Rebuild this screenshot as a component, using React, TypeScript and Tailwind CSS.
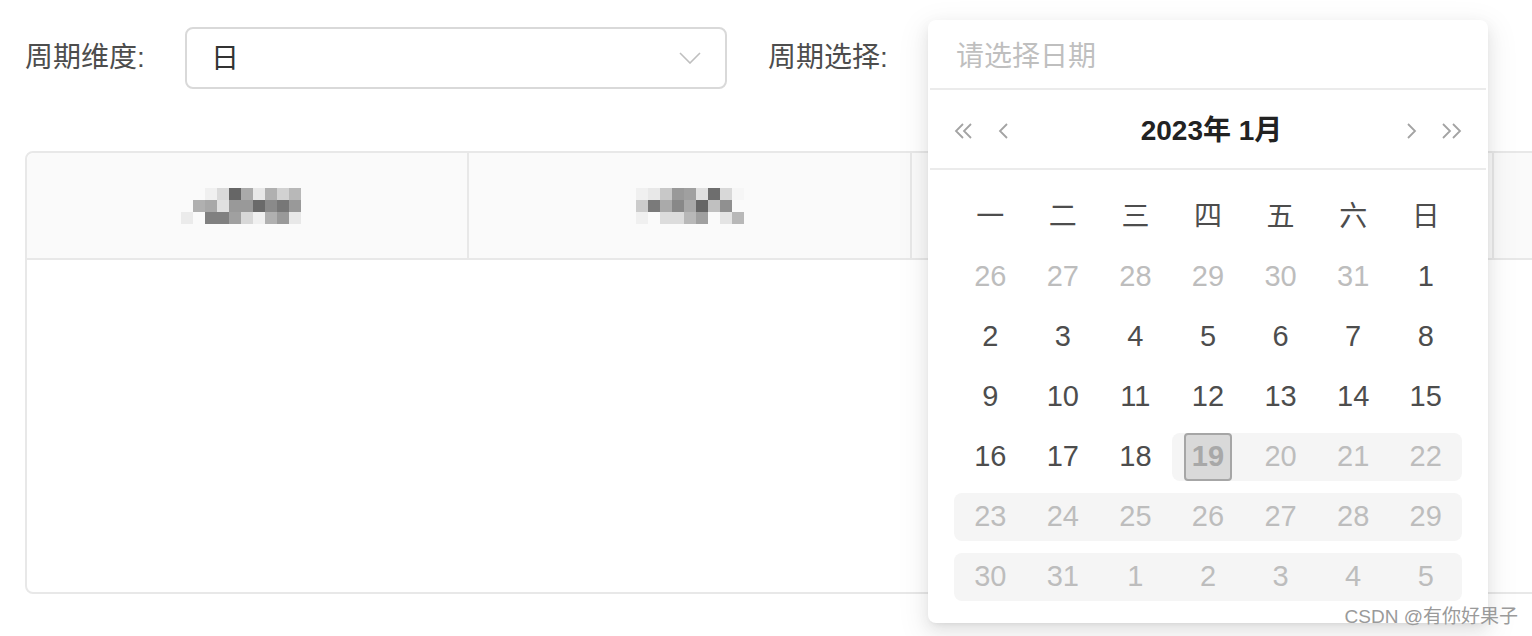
import React from "react";

const font = "font-['Liberation_Sans','Noto_Sans_CJK_SC',sans-serif]";

// pixelated (blurred) header labels, 12px blocks
const mosaicA: string[][] = [
  ["", "", "bg-[#f0f0f0]", "bg-[#dadada]", "bg-[#666666]", "bg-[#aaaaaa]", "bg-[#e8e8e8]", "bg-[#b0b0b0]", "bg-[#d2d2d2]", "bg-[#b8b8b8]"],
  ["", "bg-[#b0b0b0]", "bg-[#a8a8a8]", "bg-[#e0e0e0]", "bg-[#999999]", "bg-[#999999]", "bg-[#6a6a6a]", "bg-[#8a8a8a]", "bg-[#777777]", "bg-[#999999]"],
  ["bg-[#ebebeb]", "", "bg-[#808080]", "bg-[#808080]", "bg-[#a0a0a0]", "bg-[#d8d8d8]", "bg-[#f0f0f0]", "bg-[#b0b0b0]", "bg-[#999999]", "bg-[#e8e8e8]"],
];

const mosaicB: string[][] = [
  ["bg-[#f0f0f0]", "bg-[#e8e8e8]", "bg-[#c8c8c8]", "bg-[#999999]", "bg-[#a0a0a0]", "bg-[#e0e0e0]", "bg-[#6e6e6e]", "bg-[#d8d8d8]", "bg-[#f6f6f6]"],
  ["bg-[#cccccc]", "bg-[#7a7a7a]", "bg-[#aaaaaa]", "bg-[#888888]", "bg-[#a8a8a8]", "bg-[#666666]", "bg-[#c0c0c0]", "bg-[#909090]", ""],
  ["bg-[#f0f0f0]", "", "bg-[#dcdcdc]", "bg-[#dcdcdc]", "bg-[#b8b8b8]", "bg-[#a0a0a0]", "", "bg-[#e4e4e4]", "bg-[#b8b8b8]"],
];

function Mosaic({ rows }: { rows: string[][] }) {
  return (
    <div className="flex flex-col">
      {rows.map((row, i) => (
        <div key={i} className="flex">
          {row.map((c, j) => (
            <div key={j} className={`w-[12px] h-[12px] ${c}`} />
          ))}
        </div>
      ))}
    </div>
  );
}

type Cell = { d: number; kind: "out" | "in" | "off" | "today" };

const weeks: Cell[][] = [
  [26, 27, 28, 29, 30, 31].map((d) => ({ d, kind: "out" as const })).concat([{ d: 1, kind: "in" }]),
  [2, 3, 4, 5, 6, 7, 8].map((d) => ({ d, kind: "in" as const })),
  [9, 10, 11, 12, 13, 14, 15].map((d) => ({ d, kind: "in" as const })),
  [
    { d: 16, kind: "in" },
    { d: 17, kind: "in" },
    { d: 18, kind: "in" },
    { d: 19, kind: "today" },
    { d: 20, kind: "off" },
    { d: 21, kind: "off" },
    { d: 22, kind: "off" },
  ],
  [23, 24, 25, 26, 27, 28, 29].map((d) => ({ d, kind: "off" as const })),
  [30, 31, 1, 2, 3, 4, 5].map((d) => ({ d, kind: "off" as const })),
];

const weekDays = ["一", "二", "三", "四", "五", "六", "日"];

function Chevron({ dir, double }: { dir: "l" | "r"; double?: boolean }) {
  const w = double ? 20 : 10;
  const one = dir === "l" ? "M9 1 L2 8 L9 15" : "M1 1 L8 8 L1 15";
  const two = dir === "l" ? "M17 1 L10 8 L17 15" : "M11 1 L18 8 L11 15";
  return (
    <svg width={w} height="16" viewBox={`0 0 ${w} 16`} fill="none" stroke="#a3a3a3" strokeWidth="1.8">
      <path d={one} />
      {double && <path d={two} />}
    </svg>
  );
}

function DatePanel() {
  return (
    <div className="absolute left-0 -top-[7px] w-[560px] h-[603px] bg-white rounded-[8px] shadow-[0_6px_16px_0_rgba(0,0,0,0.08),0_3px_6px_-4px_rgba(0,0,0,0.12),0_9px_28px_8px_rgba(0,0,0,0.05)] z-10">
      <div className="h-[68px] flex items-center pl-[28px] pt-[6px] text-[28px] text-[#bfbfbf]">请选择日期</div>
      <div className="mx-[2px] border-t-2 border-[#ebebeb]" />
      <div className="h-[78px] flex items-center px-[26px] pt-[4px]">
        <div className="flex items-center gap-[24px]">
          <Chevron dir="l" double />
          <Chevron dir="l" />
        </div>
        <div className="flex-1 text-center text-[28px] font-semibold text-[#222222] pl-[8px]">2023年 1月</div>
        <div className="flex items-center gap-[25px]">
          <Chevron dir="r" />
          <Chevron dir="r" double />
        </div>
      </div>
      <div className="mx-[2px] border-t-2 border-[#ebebeb]" />
      <div className="px-[26px] pt-[17px]">
        <div className="grid grid-cols-7 h-[60px] items-center text-center text-[28px] text-[#4d4d4d]">
          {weekDays.map((w) => (
            <div key={w}>{w}</div>
          ))}
        </div>
        {weeks.map((row, ri) => (
          <div key={ri} className="grid grid-cols-7 h-[60px] items-center text-[29px]">
            {row.map((c, ci) => {
              const off = c.kind === "off" || c.kind === "today";
              const prevOff = ci > 0 && (row[ci - 1].kind === "off" || row[ci - 1].kind === "today");
              const nextOff = ci < 6 && (row[ci + 1].kind === "off" || row[ci + 1].kind === "today");
              return (
                <div
                  key={ci}
                  className={`h-[48px] flex items-center justify-center ${off ? "bg-[#f5f5f5]" : ""} ${off && !prevOff ? "rounded-l-[8px]" : ""} ${off && !nextOff ? "rounded-r-[8px]" : ""}`}
                >
                  {c.kind === "today" ? (
                    <span className="w-[48px] h-[48px] flex items-center justify-center border-2 border-[#a6a6a6] rounded-[4px] bg-[#d9d9d9] font-bold text-[#a8a8a8]">
                      {c.d}
                    </span>
                  ) : (
                    <span className={c.kind === "in" ? "text-[#4d4d4d]" : "text-[#bdbdbd]"}>{c.d}</span>
                  )}
                </div>
              );
            })}
          </div>
        ))}
      </div>
    </div>
  );
}

export default function App() {
  return (
    <div className={`relative w-full h-[636px] overflow-hidden bg-white pt-[27px] ${font}`}>
      <div className="flex items-center h-[62px] pl-[25px]">
        <span className="text-[28px] text-[#4d4d4d] w-[160px]">周期维度:</span>
        <div className="w-[542px] h-[62px] border-2 border-[#d9d9d9] rounded-[8px] flex items-center justify-between pl-[24px] pr-[24px]">
          <span className="text-[28px] text-[#333333] pt-[2px]">日</span>
          <svg width="22" height="12" viewBox="0 0 22 12" fill="none" stroke="#bfbfbf" strokeWidth="1.6">
            <path d="M1 1 L11 11 L21 1" />
          </svg>
        </div>
        <span className="text-[28px] text-[#4d4d4d] ml-[41px] w-[160px]">周期选择:</span>
        <div className="relative w-[560px] h-[62px]">
          <DatePanel />
        </div>
      </div>

      <div className="mt-[62px] ml-[25px] w-[1540px] h-[443px] border-2 border-[#e8e8e8] rounded-l-[8px] flex flex-col">
        <div className="h-[107px] bg-[#fafafa] border-b-2 border-[#e8e8e8] flex rounded-tl-[8px]">
          <div className="w-[442px] border-r-2 border-[#e8e8e8] flex items-center justify-center pr-[12px]">
            <Mosaic rows={mosaicA} />
          </div>
          <div className="w-[443px] border-r-2 border-[#e8e8e8] flex items-center justify-center">
            <Mosaic rows={mosaicB} />
          </div>
          <div className="w-[582px] border-r-2 border-[#e8e8e8]" />
          <div className="flex-1" />
        </div>
        <div className="flex-1" />
      </div>

      <div className="absolute right-[14px] top-[605px] z-20 text-[19px] text-[#9a9a9a] leading-[24px] whitespace-nowrap">
        CSDN @有你好果子
      </div>
    </div>
  );
}
